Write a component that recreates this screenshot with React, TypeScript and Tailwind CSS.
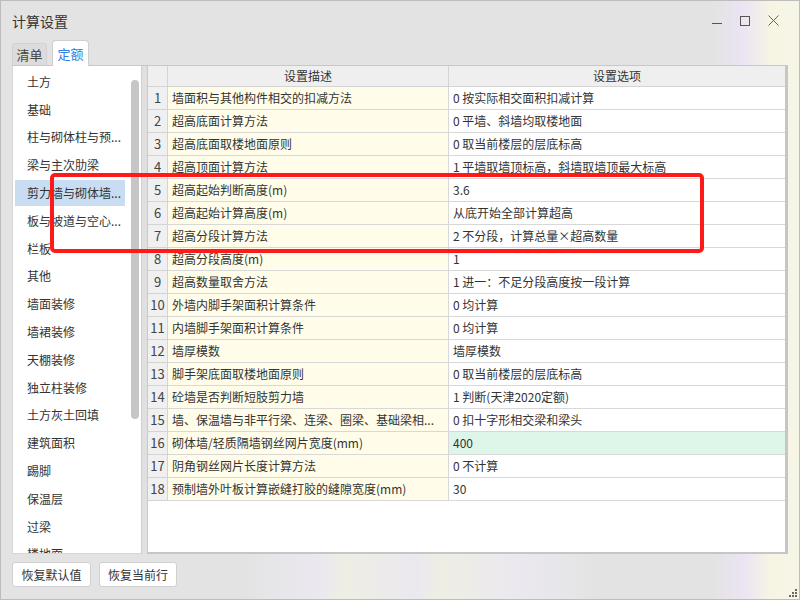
import React from "react";

const listItems = [
  "土方",
  "基础",
  "柱与砌体柱与预...",
  "梁与主次肋梁",
  "剪力墙与砌体墙...",
  "板与坡道与空心...",
  "栏板",
  "其他",
  "墙面装修",
  "墙裙装修",
  "天棚装修",
  "独立柱装修",
  "土方灰土回填",
  "建筑面积",
  "踢脚",
  "保温层",
  "过梁",
  "楼地面",
];

const rows: [string, string][] = [
  ["墙面积与其他构件相交的扣减方法", "0 按实际相交面积扣减计算"],
  ["超高底面计算方法", "0 平墙、斜墙均取楼地面"],
  ["超高底面取楼地面原则", "0 取当前楼层的层底标高"],
  ["超高顶面计算方法", "1 平墙取墙顶标高，斜墙取墙顶最大标高"],
  ["超高起始判断高度(m)", "3.6"],
  ["超高起始计算高度(m)", "从底开始全部计算超高"],
  ["超高分段计算方法", "2 不分段，计算总量×超高数量"],
  ["超高分段高度(m)", "1"],
  ["超高数量取舍方法", "1 进一：不足分段高度按一段计算"],
  ["外墙内脚手架面积计算条件", "0 均计算"],
  ["内墙脚手架面积计算条件", "0 均计算"],
  ["墙厚模数", "墙厚模数"],
  ["脚手架底面取楼地面原则", "0 取当前楼层的层底标高"],
  ["砼墙是否判断短肢剪力墙", "1 判断(天津2020定额)"],
  ["墙、保温墙与非平行梁、连梁、圈梁、基础梁相...", "0 扣十字形相交梁和梁头"],
  ["砌体墙/轻质隔墙钢丝网片宽度(mm)", "400"],
  ["阴角钢丝网片长度计算方法", "0 不计算"],
  ["预制墙外叶板计算嵌缝打胶的缝隙宽度(mm)", "30"],
];

export default function App() {
  return (
    <div
      className="relative w-[800px] h-[600px] overflow-hidden border border-[#bdbdbd] bg-[linear-gradient(90deg,#e3e3e3_0%,#e3e3e3_89%,#ebe4f3_93%,#f6f5e4_96.5%,#f6f6e6_100%)] text-[#333] font-['Noto_Sans_CJK_SC','Noto_Sans',sans-serif] flex flex-col"
    >
      {/* title bar */}
      <div className="h-[39px] shrink-0 flex items-center pl-[11px] pr-[12px]">
        <div className="text-[14px] text-[#333] leading-none">计算设置</div>
        <div className="ml-auto flex items-center">
          <div className="w-[28px] h-[28px] flex items-center justify-center">
            <div className="w-[10px] h-[1px] bg-[#555] mt-[6px]" />
          </div>
          <div className="w-[28px] h-[28px] flex items-center justify-center">
            <div className="w-[10px] h-[10px] border border-[#555]" />
          </div>
          <div className="w-[28px] h-[28px] flex items-center justify-center">
            <svg width="11" height="11" viewBox="0 0 11 11">
              <path d="M0.5 0.5 L10.5 10.5 M10.5 0.5 L0.5 10.5" stroke="#666" strokeWidth="1" />
            </svg>
          </div>
        </div>
      </div>

      {/* tabs */}
      <div className="h-[25px] shrink-0 flex items-end pl-[11px] gap-[5px]">
        <div className="w-[35px] h-[22px] flex items-center justify-center text-[13px] text-[#444] bg-[#dcdcdc] border border-b-0 border-[#d2d2d2] rounded-t-[3px]">
          清单
        </div>
        <div className="w-[37px] h-[26px] -mb-[1px] relative z-10 flex items-center justify-center text-[13px] text-[#2e7de0] bg-white border border-b-0 border-[#cfcfcf] rounded-t-[4px]">
          定额
        </div>
      </div>

      {/* content */}
      <div className="mx-[11px] h-[489px] shrink-0 flex bg-[#d6d6d6] border-t border-[#c8c8c8]">
        {/* list panel */}
        <div className="w-[128px] ml-[1px] mb-[1px] bg-white flex overflow-hidden">
          <div className="w-[116px] pt-[2px] flex flex-col">
            {listItems.map((t, i) => (
              <div key={t} className="h-[27.8px] shrink-0 flex items-center">
                <div
                  className={
                    "h-[26px] w-[110px] ml-[2px] flex items-center pl-[12px] text-[12px] whitespace-nowrap " +
                    (i === 4 ? "bg-[#c9ddf2]" : "")
                  }
                >
                  {t}
                </div>
              </div>
            ))}
          </div>
          <div className="w-[12px] flex justify-center">
            <div className="mt-[14px] w-[8px] h-[339px] rounded-full bg-[#c6c6c6]" />
          </div>
        </div>

        {/* splitter */}
        <div className="w-[6px] bg-[#e0e0e0] border-l border-[#d0d0d0]" />

        {/* table panel */}
        <div className="flex-1 bg-white border-l border-[#c9c9c9] border-r-[3px] border-r-[#c6c6c6] border-b-[2px] border-b-[#c6c6c6]">
          <div className="grid grid-cols-[20px_281px_1fr] text-[12px]">
            <div className="h-[21px] bg-[#efefef] border-r border-b border-[#d4d4d4]" />
            <div className="h-[21px] bg-[#efefef] border-r border-b border-[#d4d4d4] flex items-center justify-center">
              设置描述
            </div>
            <div className="h-[21px] bg-[#efefef] border-b border-[#d4d4d4] flex items-center justify-center">
              设置选项
            </div>
            {rows.map(([d, o], i) => (
              <React.Fragment key={i}>
                <div className="h-[23px] bg-[#f0f0f0] border-r border-b border-[#d4d4d4] flex items-center justify-center text-[13px] text-[#444]">
                  {i + 1}
                </div>
                <div className="h-[23px] bg-[#fffde9] border-r border-b border-[#d8d8d8] flex items-center pl-[4px] whitespace-nowrap overflow-hidden">
                  <span className="truncate">{d}</span>
                </div>
                <div
                  className={
                    "h-[23px] border-b border-[#d8d8d8] flex items-center pl-[4px] whitespace-nowrap overflow-hidden " +
                    (i === 15 ? "bg-[#def5ea]" : "bg-white")
                  }
                >
                  {o}
                </div>
              </React.Fragment>
            ))}
          </div>
        </div>
      </div>

      {/* bottom buttons */}
      <div className="flex-1 flex items-start pt-[8px] pl-[11px] gap-[8px] bg-[linear-gradient(90deg,rgba(255,255,255,0)_0%,rgba(255,255,255,0)_30%,rgba(240,236,248,0.6)_40%,rgba(246,245,228,0.6)_43%,rgba(240,236,248,0.6)_52%,rgba(246,245,228,0.6)_55%,rgba(240,236,248,0.6)_65%,rgba(255,255,255,0)_75%)]">
        <button className="w-[79px] h-[25px] bg-white border border-[#d0d0d0] rounded-[3px] text-[12px] text-[#333] flex items-center justify-center">
          恢复默认值
        </button>
        <button className="w-[78px] h-[25px] bg-white border border-[#d0d0d0] rounded-[3px] text-[12px] text-[#333] flex items-center justify-center">
          恢复当前行
        </button>
      </div>

      {/* resize grip */}
      <svg className="absolute right-[2px] bottom-[2px]" width="8" height="8" viewBox="0 0 8 8">
        <rect x="6" y="0" width="2" height="2" fill="#666" />
        <rect x="3" y="3" width="2" height="2" fill="#666" />
        <rect x="6" y="3" width="2" height="2" fill="#666" />
        <rect x="0" y="6" width="2" height="2" fill="#666" />
        <rect x="3" y="6" width="2" height="2" fill="#666" />
        <rect x="6" y="6" width="2" height="2" fill="#666" />
      </svg>

      {/* red annotation */}
      <div className="absolute left-[49px] top-[172px] w-[654px] h-[80px] border-[4px] border-[#ff1a1a] rounded-[5px] pointer-events-none" />
    </div>
  );
}
